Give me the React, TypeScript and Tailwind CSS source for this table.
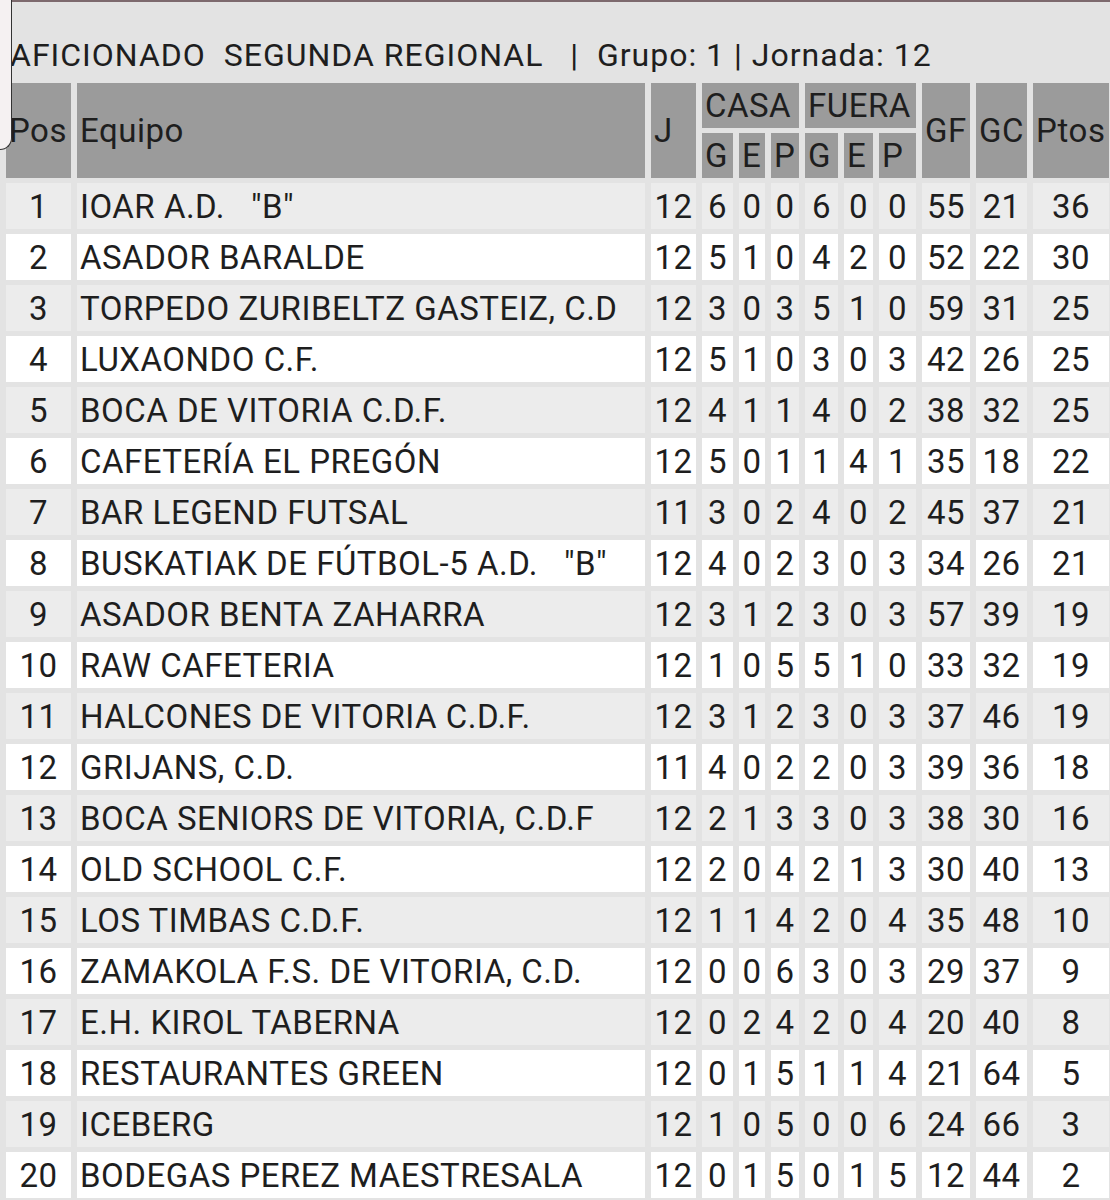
import React from "react";

type Row = [number, string, number, number, number, number, number, number, number, number, number, number];

const rows: Row[] = [
  [1, 'IOAR A.D.   "B"', 12, 6, 0, 0, 6, 0, 0, 55, 21, 36],
  [2, "ASADOR BARALDE", 12, 5, 1, 0, 4, 2, 0, 52, 22, 30],
  [3, "TORPEDO ZURIBELTZ GASTEIZ, C.D", 12, 3, 0, 3, 5, 1, 0, 59, 31, 25],
  [4, "LUXAONDO C.F.", 12, 5, 1, 0, 3, 0, 3, 42, 26, 25],
  [5, "BOCA DE VITORIA C.D.F.", 12, 4, 1, 1, 4, 0, 2, 38, 32, 25],
  [6, "CAFETERÍA EL PREGÓN", 12, 5, 0, 1, 1, 4, 1, 35, 18, 22],
  [7, "BAR LEGEND FUTSAL", 11, 3, 0, 2, 4, 0, 2, 45, 37, 21],
  [8, 'BUSKATIAK DE FÚTBOL-5 A.D.   "B"', 12, 4, 0, 2, 3, 0, 3, 34, 26, 21],
  [9, "ASADOR BENTA ZAHARRA", 12, 3, 1, 2, 3, 0, 3, 57, 39, 19],
  [10, "RAW CAFETERIA", 12, 1, 0, 5, 5, 1, 0, 33, 32, 19],
  [11, "HALCONES DE VITORIA C.D.F.", 12, 3, 1, 2, 3, 0, 3, 37, 46, 19],
  [12, "GRIJANS, C.D.", 11, 4, 0, 2, 2, 0, 3, 39, 36, 18],
  [13, "BOCA SENIORS DE VITORIA, C.D.F", 12, 2, 1, 3, 3, 0, 3, 38, 30, 16],
  [14, "OLD SCHOOL C.F.", 12, 2, 0, 4, 2, 1, 3, 30, 40, 13],
  [15, "LOS TIMBAS C.D.F.", 12, 1, 1, 4, 2, 0, 4, 35, 48, 10],
  [16, "ZAMAKOLA F.S. DE VITORIA, C.D.", 12, 0, 0, 6, 3, 0, 3, 29, 37, 9],
  [17, "E.H. KIROL TABERNA", 12, 0, 2, 4, 2, 0, 4, 20, 40, 8],
  [18, "RESTAURANTES GREEN", 12, 0, 1, 5, 1, 1, 4, 21, 64, 5],
  [19, "ICEBERG", 12, 1, 0, 5, 0, 0, 6, 24, 66, 3],
  [20, "BODEGAS PEREZ MAESTRESALA", 12, 0, 1, 5, 0, 1, 5, 12, 44, 2],
];

const widths = [65, 568, 45, 31, 26, 28, 33, 29, 37, 48, 51, 76];

const th = "bg-[#9b9b9b] font-normal text-left px-[3px] p-0 align-middle";

export default function App() {
  return (
    <div
      className="relative w-[1110px] h-[1200px] overflow-hidden bg-[#e3e3e3] text-[#1e1e1e]"
      style={{ fontFamily: "Roboto, 'Noto Sans', sans-serif" }}
    >
      <div className="absolute top-0 left-0 right-0 h-[2px] bg-[#7d6a6e]" />
      <div className="absolute top-0 left-0 w-[12px] h-[150px] bg-[#f5f1f2] border-r-[1.5px] border-b-[1.5px] border-[#333] rounded-br-[14px]" />

      <div className="h-[78px] pl-[10px] pt-[35px] text-[32px] leading-[40px] tracking-[1px] whitespace-pre">
        {"AFICIONADO  SEGUNDA REGIONAL   |  Grupo: 1 | Jornada: 12"}
      </div>

      <table className="table-fixed w-[1115px] border-separate border-spacing-x-[6px] border-spacing-y-[5px] text-[33px] leading-none tracking-[0.5px]">
        <colgroup>
          {widths.map((w, i) => (
            <col key={i} style={{ width: w }} />
          ))}
        </colgroup>
        <thead>
          <tr className="h-[45px]">
            <th rowSpan={2} className={th}>Pos</th>
            <th rowSpan={2} className={th}>Equipo</th>
            <th rowSpan={2} className={th}>J</th>
            <th colSpan={3} className={th}>CASA</th>
            <th colSpan={3} className={th}>FUERA</th>
            <th rowSpan={2} className={th}>GF</th>
            <th rowSpan={2} className={th}>GC</th>
            <th rowSpan={2} className={th}>Ptos</th>
          </tr>
          <tr className="h-[45px]">
            <th className={`${th} text-center`}>G</th>
            <th className={`${th} text-center`}>E</th>
            <th className={`${th} text-center`}>P</th>
            <th className={`${th} text-center`}>G</th>
            <th className={`${th} text-center`}>E</th>
            <th className={`${th} text-center`}>P</th>
          </tr>
        </thead>
        <tbody>
          {rows.map((r, i) => {
            const bg = i % 2 === 0 ? "bg-[#ececec]" : "bg-white";
            return (
              <tr key={r[0]} className="h-[46px]">
                {r.map((v, j) => (
                  <td
                    key={j}
                    className={`${bg} p-0 align-middle ${
                      j === 1 ? "text-left pl-[3px] whitespace-pre overflow-hidden" : "text-center"
                    }`}
                  >
                    {v}
                  </td>
                ))}
              </tr>
            );
          })}
        </tbody>
      </table>
    </div>
  );
}
